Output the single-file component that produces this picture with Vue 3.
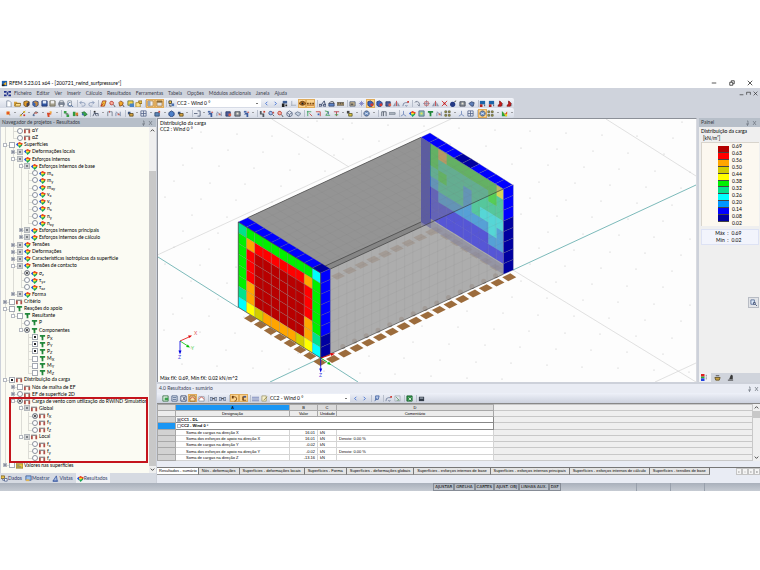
<script setup>
import { h, ref } from 'vue'

// every glyph is drawn on an 8x8 grid: [path, fill, stroke]
const glyphs = {
  app: [['M1 1h6v6h-6z', '#1d5fae'], ['M2 5l4-3v4z', '#f2b32c'], ['M1 5h3v2h-3z', '#222']],
  logo: [['M0 1h3v2h-3zM5 1h3v2h-3zM0 5h3v2h-3zM5 5h3v2h-3z', '#20308c'], ['M3 4h2M4 2v4', '', '#20308c']],
  doc: [['M2 1h3l2 2v5h-5z', '#fff', '#7f8ca0']],
  open: [['M0 2h3l1 1h3v4h-7z', '#d8a138'], ['M1 7l1-3h6l-1 3z', '#ffe08a', '#8a6420']],
  boxO: [['M1 2l3-1 3 1v4l-3 2-3-2z', '#e09a28', '#64481a'], ['M4 4l3-2v4l-3 2z', '#3d3d55']],
  boxB: [['M1 2l3-1 3 1v4l-3 2-3-2z', '#c98a3a', '#243c78'], ['M1 2l3 2v4l-3-2z', '#3764b4']],
  save: [['M1 1h6v6h-6z', '#2f55a4', '#1c2f66'], ['M2 1h4v3h-4z', '#dfe8f8']],
  saveG: [['M1 1h6v6h-6z', '#a6a08c', '#6a665a'], ['M2 1h4v3h-4z', '#eee']],
  print: [['M1 3h6v3h-6z', '#8d97a6', '#4c5666'], ['M2 1h4v2h-4zM2 5h4v3h-4z', '#fff', '#6c7684']],
  preview: [['M1 1h4v6h-4z', '#fff', '#7c8796'], ['M4 3a2 2 0 1 0 1 3l2 2', '', '#35598f']],
  undo: [['M1 3h4a2 2 0 0 1 0 4h-2M1 3l2-2M1 3l2 2', '', '#8294b4']],
  redo: [['M7 3h-4a2 2 0 0 0 0 4h2M7 3l-2-2M7 3l-2 2', '', '#8294b4']],
  slab: [['M1 7l2-6h4l-2 6z', '#f0c23a', '#a03a20'], ['M1 7l3-3', '', '#c32020']],
  zoomR: [['M5 5l2 3', '', '#444'], ['M1 3a2 2 0 1 1 4 1 2 2 0 0 1-4-1z', '#f7b0a0', '#b8332a']],
  zoomO: [['M5 5l2 3', '', '#333'], ['M1 3l2-2 3 2-1 3-3 1z', '#f2a82c', '#8a4614']],
  win: [['M1 1h6v5h-6z', '#f6d44a', '#5c6f3a'], ['M3 4h5v4h-5z', '#4a84c4']],
  pack: [['M1 3h5v5h-5z', '#ffe48a', '#a8842c'], ['M4 1h4v3h-3z', '#e8c24c', '#86641a']],
  panel: [['M1 1h6v6h-6z', '#f0f0f0', '#b07a2c'], ['M1 1h3v6h-3z', '#9aa6b6']],
  panelT: [['M1 1h6v6h-6z', '#e4e4e4', '#a37230'], ['M1 1h6v2h-6z', '#8a6a34']],
  load: [['M1 1h3v3h-3z', '#f2c83a', '#333'], ['M4 4h3v3h-3z', '#4a70b0'], ['M2 5v2h2', '', '#333']],
  prev: [['M5 2l-2 2 2 2', '', '#2a5fd0']],
  next: [['M3 2l2 2-2 2', '', '#2a5fd0']],
  fx: [['M2 1h5v3h-5z', '#3a5a90'], ['M1 4h3v4h-3zM5 5h2v2h-2z', '#222']],
  axes: [['M2 1v5h5M2 6l-1 1', '', '#9aa4b4']],
  eye: [['M0 4q4-5 8 0q-4 4-8 0z', '#b56c1c', '#5c3206'], ['M3 3h2v2h-2z', '#123']],
  abc: [['M0 3h2v2h-2zM3 3h2v2h-2zM6 3h2v2h-2z', '#7a4a14'], ['M0 6h8', '', '#b4641c']],
  glass: [['M0 5h3v2h-3zM5 5h3v2h-3z', '', '#26365c'], ['M3 5l3-4M7 5l-1-4', '', '#26365c']],
  bed: [['M1 4h6v3h-6z', '#5c84c8', '#33446c'], ['M1 4l2-2h3l1 2', '', '#333']],
  ruler: [['M0 3h8v3h-8z', '#b8a070', '#5a5648'], ['M2 3v2M4 3v2M6 3v2', '', '#444']],
  img: [['M1 2h6v5h-6z', '#c8b48a', '#50607a'], ['M2 4h3v2h-3z', '#5c5c5c']],
  sun: [['M4 1v6M1 4h6M2 2l4 4M6 2l-4 4', '', '#7a80c4']],
  redblue: [['M1 2l3-1 3 2v3l-3 2-3-2z', '#3a64c0', '#24366c'], ['M4 4h3v3h-3z', '#d43a30']],
  globe: [['M4 1a3 3 0 1 0 .1 0z', '#6c90c4', '#3a4c6c'], ['M2 3l4 2M2 5l4-2', '', '#dce6f4']],
  iso: [['M1 3l3-2 3 2v3l-3 2-3-2zM1 3l3 2 3-2M4 5v3', '', '#51617e']],
  sheet: [['M1 4l3-2 4 2-3 3z', '#c2cede', '#66748a']],
  rot: [['M2 2q5-1 4 5M6 7l-2-2M1 3l2-2', '', '#697284']],
  move: [['M4 0v8M0 4h8', '', '#8892ac'], ['M2 2h4v4h-4z', '', '#c05a5a']],
  mirror: [['M4 1v6', '', '#c03030'], ['M3 2v5h-3zM5 2v5h3z', '#8a94a8']],
  cross: [['M1 1l6 6M7 1l-6 6', '', '#d01818'], ['M3 3h2v2h-2z', '#c02020']],
  ball: [['M3 2a3 3 0 1 0 .1 0z', '#243a84'], ['M5 2l2-1', '', '#222']],
  camera: [['M1 2h6v5h-6z', '#8c939c', '#40454e'], ['M3 3h2v2h-2z', '#e8e4d0']],
  hand: [['M1 4l3-2 3 1-1 4h-2z', '#5f7fb8', '#33466c']],
  blueRed: [['M1 1h6v4h-6z', '#1c64a8'], ['M1 5h3v3h-3z', '#b42420'], ['M6 5h1v2h-1z', '#27405c']],
  flame: [['M3 1l3 3-1 3h-4l2-3z', '#cc1c1c', '#7c1010'], ['M6 4h1v3h-1z', '#88929c']],
  node: [['M2 2h3v3h-3z', '#e03a20', '#f0a040'], ['M5 5h1v1h-1z', '#444']],
  line: [['M1 7l6-6', '', '#3a3a3a'], ['M1 5h2v2h-2zM5 1h2v2h-2z', '#d8b020'], ['M5 5h2v2h-2z', '#d03428']],
  line2: [['M1 6l3-4 3 1', '', '#444'], ['M3 3h3v1h-3z', '#d03a2a'], ['M1 5h2v2h-2z', '#5470a0']],
  surf: [['M1 3h5v2h-2v3h-2z', '#d84a2a'], ['M4 1l3 1-2 3z', '#f0a83c']],
  green: [['M1 1h3v3h-3zM4 5h3v3h-3z', '#36a046'], ['M3 4h3v1h-3z', '#333']],
  greenO: [['M1 2h3v5h-3z', '#2f9a40'], ['M4 3h3v3h-3z', '#d87a2c'], ['M5 6h2v1h-2z', '#7a3a10']],
  greenB: [['M1 3l3-1 3 3-3 2z', '#39a84a', '#1d6a30'], ['M1 4h2v2h-2z', '#3d6cc0']],
  frame: [['M2 7v-5h5v5', '', '#6a7484'], ['M4 1v2', '', '#c83830']],
  man: [['M2 1h2v2h-2z', '#333'], ['M1 7l2-4 2 4M3 4h4v3', '', '#3c4860']],
  lcube: [['M1 2h3v3h-3z', '#36517e'], ['M3 4h4v3h-4z', '#d8a43c', '#5a4a24']],
  grid: [['M1 1h6v6h-6zM1 4h6M4 1v6', '', '#53648a']],
  bluecube: [['M1 3l3-2 3 2v3l-3 2-3-2z', '#4d80c8', '#1f3a70']],
  shade: [['M1 3h5v4h-5z', '#5d86b8', '#2f4768'], ['M5 1h2v2h-2z', '#d84a3a']],
  arrowI: [['M0 4h4M4 1h3v6h-3', '', '#4a5670']],
  measA: [['M1 1h3v2h-3z', '#4c6aa8'], ['M3 3h3v5h-2v-3h-3z', '#3a5a9c'], ['M5 2h2v1h-2z', '#c43028']],
  measB: [['M1 2l5 4M6 2v5M1 3v4', '', '#6f80a2'], ['M3 4h2v2h-2z', '#d06a5a']],
  loadB: [['M1 2h5v5h-5z', '#4a5c9c', '#27345c'], ['M4 4h3v3h-3z', '#d86048']],
  tool: [['M1 1h2v3h3v4h-2v-3h-3z', '#51575f'], ['M5 1h2v2h-2z', '#c84030']],
  zoomB: [['M5 5l2 2', '', '#444'], ['M1 3a2 2 0 1 1 4 1 2 2 0 0 1-4-1z', '#a9c4ec', '#2e4f90'], ['M5 2h2v2h-2z', '#c85048']],
  vx: [['M1 2h5M2 1v6', '', '#2f9a54'], ['M4 4l3 3', '', '#c03a34']],
  vy: [['M1 2h5v5', '', '#c0362c'], ['M3 4h2v2h-2z', '#3764b4']],
  vz: [['M1 1l4 1-3 4h5', '', '#2c9448'], ['M5 2v3', '', '#385a9c']],
  vi: [['M1 2h6M4 2v5', '', '#b03440'], ['M2 5h4v1h-4z', '#36a046']],
  opt: [['M1 1h3v3h-3z', '#444'], ['M3 4h4v3h-4z', '#d8c03a', '#5a5a34']],
  rail: [['M2 7v-5h5v5M4 2v5', '', '#4a5462']],
  lens: [['M0 3h7v2h-7z', '#b4bcc6', '#7c8692']],
  tri: [['M4 1v4l-3 2M4 5l3 2', '', '#6b84b8']],
  rainbow: [['M1 3l3-2 4 2-2 2z', '#e83018'], ['M0 4l2-2 1 3-1 1z', '#1f52e0'], ['M2 5l5-1 0 1-3 3z', '#18a858'], ['M2 3l4 0-1 2h-2z', '#ffe628']],
  mesh: [['M1 1h6v6h-6z', '#8cc8a8', '#53648a'], ['M3 3h2v2h-2z', '#f0e050']],
  support: [['M1 1h6v2h-2v4h-2v-4h-2z', '#238a3c'], ['M3 3h1v1h-1z', '#0e4a1c']],
  squares: [['M1 1h2v2h-2zM5 1h2v2h-2zM1 5h2v2h-2zM5 5h2v2h-2z', '#c8b83c', '#5a5c44']],
  chart: [['M1 1v6h6z', '#2aa040'], ['M2 2l3 3 2-4v6h-2z', '#f0d020'], ['M4 5l3-3v2z', '#d02020']],
  redN: [['M0 2h7v1h-7z', '#50505a'], ['M0 3h2v4h-2zM5 3h2v4h-2z', '#b05048']],
  note: [['M0 2h8v5h-8z', '#e9c83c', '#8c7420'], ['M1 3h3v1h-3zM1 5h5v1h-5z', '#5a6a8a']],
  data: [['M0 1h4v3h-4z', '#f0c64c', '#7c6420'], ['M4 4h3v3h-3zM2 4v2h2', '#fff', '#4a5c88']],
  view: [['M1 7l4-6 1 6z', '#a8bce0', '#3454a0'], ['M1 7h6', '', '#3454a0']],
  show: [['M1 1h6v5h-6z', '#9cc0ec', '#3a5a94'], ['M1 5h4v2h-4z', '#e0b454']],
  tabG: [['M1 1h6v6h-6z', '#e9f4ea', '#2c6a3c'], ['M3 3h4v3h-4z', '#38a04c']],
  tabB: [['M1 1h6v6h-6z', '#e6edf8', '#40557c'], ['M2 3h4M2 5h4', '', '#40557c']],
  tabX: [['M1 1h6v6h-6z', '#fff', '#26365c'], ['M3 2l3 4M6 2l-3 4', '', '#26365c']],
  tabR: [['M1 2h6v5h-6z', '#fff', '#8a90a0'], ['M1 5l3-3 3 3', '', '#d04a40']],
  tabRO: [['M1 1h6v6h-6z', '#fbe0a8', '#8a5a20'], ['M1 5l3-3 3 3', '', '#c03a30']],
  merge: [['M0 3h3v3h-3zM5 3h3v3h-3z', '#c8d4e8', '#51617e'], ['M3 4h2', '', '#333']],
  hookA: [['M1 2h3a2 2 0 0 1 0 5', '', '#70400e'], ['M1 1h2v3h-2z', '#6a3c0c']],
  hookB: [['M6 2h-3v4h4M4 2v4', '', '#70400e'], ['M4 1h3v2h-3z', '#4a5a8c']],
  rows: [['M0 2h8v1h-8zM0 4h8v1h-8zM0 6h8v1h-8z', '#8290c0']],
  pen: [['M1 1h5v6h-5z', '#f6f0cc', '#a09a70'], ['M3 6l4-4', '', '#8a7a34']],
  pin: [['M2 7l2-3M3 1h4l-1 4h-3z', '#b6c8e8', '#3a5a9c']],
  pinR: [['M1 7q0-4 3-4h3M4 6a1 1 0 1 0 2 0', '', '#6a7896'], ['M6 1h2v2h-2z', '#d04038']],
  mark: [['M1 1h6v6h-6z', '#dfe4ec', '#a8b0bc'], ['M2 2l4 4h-3', '', '#6a9a74']],
  excel: [['M1 1h6v6h-6z', '#2f8f46', '#17602c'], ['M3 3l3 3M6 3l-3 3', '', '#fff']],
  calc: [['M1 2h6v5h-6z', '#333c48'], ['M2 3h4v1h-4z', '#cfd8e4']],
  legend: [['M0 0h4v3h-4z', '#e02020'], ['M0 3h4v2h-4z', '#28b040'], ['M0 5h4v3h-4z', '#2040e0'], ['M6 1v1M6 3v1M6 5v1', '', '#444']],
  scale: [['M1 4h6l-1 3h-4z', '#c8a040', '#5a4a20'], ['M2 2h4', '', '#333']],
  scope: [['M1 7h6M3 6l2-5 1 1v4', '#444', '#222']],
  lookup: [['M1 1h4v5h-4z', '#dce8f8', '#4c6490'], ['M4 4h2v2h-2zM6 6l2 2', '#fff', '#33466c']]
}

const Glyph = (props) =>
  h('svg', { viewBox: '0 0 8 8', class: 'glyph', 'aria-hidden': 'true' },
    (glyphs[props.name] || []).map((p) =>
      h('path', { d: p[0], fill: p[1] || 'none', stroke: p[2] || 'none', 'stroke-width': 0.9 })))
Glyph.props = ['name']

const menus = ['Ficheiro', 'Editar', 'Ver', 'Inserir', 'Cálculo', 'Resultados', 'Ferramentas', 'Tabela', 'Opções', 'Módulos adicionais', 'Janela', 'Ajuda']

// "|" is a separator, "v" a drop-down caret, a leading * marks a pressed button
const split = (text) => text.split(' ')
const barA = split('doc open boxO boxB save saveG print preview | undo redo | slab zoomR zoomO win pack | *panel *panelT | load')
const barB = split('prev next fx axes *eye *abc | glass bed ruler | img sun *redblue redblue loadB mirror pinR | rot move mirror cross ball camera hand | blueRed blueRed flame flame')
const barC = split('node v line v line2 v surf v | green greenO greenB | man v frame measB | lcube v grid v shade v bluecube lcube v | arrowI v measA measB loadB camera measA v | tool zoomB zoomR iso sheet | vx vy vz vi v opt v | globe v | rail lens | tri rainbow mesh support measB squares v tri grid | *globe squares v chart v')
const barTable = split('tabG tabB tabX *tabRO tabR | merge merge | *hookA *hookB | rows pen')
const barTable2 = split('prev next | pin | pinR mark | excel | calc')

// depth, mark, icon, text, subscript, expander
const rows = [
  [1, 'r', 'redN', 'αY'], [1, 'r', 'redN', 'αZ'],
  [0, 'c', 'rainbow', 'Superfícies', '', '-'],
  [1, 'm', 'rainbow', 'Deformações locais', '', '+'],
  [1, 'm', 'rainbow', 'Esforços internos', '', '-'],
  [2, 'm', 'rainbow', 'Esforços internos de base', '', '-'],
  [3, 'r', 'rainbow', 'm', 'x'], [3, 'r', 'rainbow', 'm', 'y'], [3, 'r', 'rainbow', 'm', 'xy'],
  [3, 'r', 'rainbow', 'v', 'x'], [3, 'r', 'rainbow', 'v', 'y'], [3, 'r', 'rainbow', 'n', 'x'],
  [3, 'r', 'rainbow', 'n', 'y'], [3, 'r', 'rainbow', 'n', 'xy'],
  [2, 'm', 'rainbow', 'Esforços internos principais', '', '+'],
  [2, 'm', 'rainbow', 'Esforços internos de cálculo', '', '+'],
  [1, 'm', 'rainbow', 'Tensões', '', '+'],
  [1, 'm', 'rainbow', 'Deformações', '', '+'],
  [1, 'm', 'rainbow', 'Características isotrópicas da superfície', '', '+'],
  [1, 'm', 'rainbow', 'Tensões de contacto', '', '-'],
  [2, 'R', 'rainbow', 'σ', 'z'], [2, 'r', 'rainbow', 'τ', 'yz'], [2, 'r', 'rainbow', 'τ', 'xz'],
  [1, 'm', 'rainbow', 'Forma', '', '+'],
  [0, 'c', 'redN', 'Critério', '', '+'],
  [0, 'c', 'support', 'Reações do apoio', '', '-'],
  [1, 'c', 'support', 'Resultante', '', '-'],
  [2, 'r', 'support', 'P'],
  [2, 'R', 'support', 'Componentes', '', '-'],
  [3, 'C', 'support', 'P', 'X'], [3, 'C', 'support', 'P', 'Y'], [3, 'C', 'support', 'P', 'Z'],
  [3, 'c', 'support', 'M', 'X'], [3, 'c', 'support', 'M', 'Y'], [3, 'c', 'support', 'M', 'Z'],
  [0, 'C', 'redN', 'Distribuição da carga', '', '-'],
  [1, 'c', 'redN', 'Nós de malha de EF', '', '+'],
  [1, 'r', 'redN', 'EF de superfície 2D', '', '+'],
  [1, 'R', 'redN', 'Carga de vento com utilização do RWIND Simulation', '', '-'],
  [2, 'm', 'redN', 'Global', '', '-'],
  [3, 'R', 'redN', 'f', 'X'], [3, 'r', 'redN', 'f', 'Y'], [3, 'r', 'redN', 'f', 'Z'],
  [2, 'm', 'redN', 'Local', '', '-'],
  [3, 'r', 'redN', 'f', 'x'], [3, 'r', 'redN', 'f', 'y'], [3, 'r', 'redN', 'f', 'z'],
  [0, 'c', 'note', 'Valores nas superfícies', '', '+']
]

// does the branch at this depth go on below row i?
const goesOn = (i, depth) => {
  for (let k = i + 1; k < rows.length; k++) {
    if (rows[k][0] === depth) return true
    if (rows[k][0] < depth) return false
  }
  return false
}

const tree = ref(rows.map(([depth, mark, icon, text, sub, exp], i) => ({
  id: 'row' + i,
  depth, icon, text, sub, exp,
  radio: mark.toLowerCase() === 'r',
  mixed: mark === 'm',
  checked: mark === 'R' || mark === 'C',
  guides: Array.from({ length: depth + 1 }, (_, d) => ({
    own: d === depth,
    down: goesOn(i, d)
  }))
})))

const navTabs = [['data', 'Dados'], ['show', 'Mostrar'], ['view', 'Vistas'], ['rainbow', 'Resultados']]

const legendColors = ['#b40000', '#ff0000', '#ffa500', '#d2cd00', '#ffff00', '#00f000', '#00e28c', '#00ffff', '#0096ff', '#0000ff', '#0000a0']
const legendValues = ['0.69', '0.63', '0.56', '0.50', '0.44', '0.38', '0.32', '0.26', '0.20', '0.14', '0.08', '0.02']

const tableRows = [
  ['Soma de cargas na direção X', '16.01', 'kN', ''],
  ['Soma dos esforços de apoio na direção X', '16.01', 'kN', 'Desvio:  0.00 %'],
  ['Soma de cargas na direção Y', '-0.02', 'kN', ''],
  ['Soma dos esforços de apoio na direção Y', '-0.02', 'kN', 'Desvio:  0.00 %'],
  ['Soma de cargas na direção Z', '-13.16', 'kN', '']
]
const sheets = ['Resultados - sumário', 'Nós - deformações', 'Superfícies - deformações locais', 'Superfícies - Forma', 'Superfícies - deformações globais', 'Superfícies - esforços internos de base', 'Superfícies - esforços internos principais', 'Superfícies - esforços internos de cálculo', 'Superfícies - tensões de base']
const toggles = ['AJUSTAR', 'GRELHA', 'CARTES', 'AJUST. OBJ', 'LINHAS AUX.', 'DXF']

// model drawing
const shade = {
  T: '#00e28c', G: '#00f000', C: '#00ffff', O: '#ffa500', R: '#ff0000', D: '#b80000',
  Y: '#ffff00', L: '#d2cd00', B: '#0000ff', N: '#0000a0', S: '#0096ff'
}
const quad = (x, y, ux, uy, vx, vy) =>
  `${x},${y} ${x + ux},${y + uy} ${x + ux + vx},${y + uy + vy} ${x + vx},${y + vy}`

const patch = (map, x, y, ux, uy, vx, vy) =>
  map.flatMap((line, r) => [...line].map((key, c) => ({
    fill: shade[key],
    points: quad(x + c * ux + r * vx, y + c * uy + r * vy, ux, uy, vx, vy)
  })))

const front = patch(['TGGGGGGGGC', 'GORRRRRROG', 'GRDDDDDDRG', 'GRDDDDDDRG', 'GRDDDDDDRG', 'GODDDDDDOG', 'TODDDDDDOT', 'CYLOOOOLYC'],
  238.3, 222, 8.24, 5.1, 0, 10.65)
const frontTop = patch(['BBBBBBBBBN'], 238.3, 222, 8.24, 5.1, 9.4, -4.3)
const frontSide = patch(['B', 'B', 'B', 'B', 'B', 'B', 'N', 'N'], 320.7, 273, 9.6, -4.2, 0, 10.65)
const back = patch(['GGGGGGGGGG', 'GOGGGGGGYY', 'GTTTTTTGTT', 'TGTTSTTTTT', 'STTTSTCCCC', 'BSSSSSSCSS', 'BBBBBBBSSS', 'BBBBBBBBBB'],
  430, 133, 8.33, 5.17, 0, 10.67)
const backTop = patch(['BBBBNNBBBB'], 421, 137.3, 8.25, 5.17, 9, -4.3)
const backSide = patch(['B', 'B', 'B', 'N', 'N', 'N', 'N', 'N'], 503.4, 189, 9.9, -4.3, 0, 10.67)

const meshLines = []
for (let i = 1; i < 21; i++) {
  const x = 247.7 + i * 8.25
  const y = 217.7 - i * 3.83
  meshLines.push(`M${x} ${y}l82.6 51.5v85.3`)
}
for (let i = 1; i < 10; i++) meshLines.push(`M${247.7 + i * 8.26} ${217.7 + i * 5.13}l173.3 -80.4`)
for (let i = 1; i < 8; i++) meshLines.push(`M330.3 ${269 + i * 10.65}l173 -80`)

const pads = []
for (let i = 0; i < 8; i++) pads.push(quad(244 + i * 9.9, 318.2 + i * 6.2, 6, -3.4, 7, 4.3))
for (let i = 0; i < 16; i++) pads.push(quad(326 + i * 11.75, 359 - i * 5.45, 8, -4, 6, 3.9))
const hiddenPads = []
for (let i = 0; i < 9; i++) hiddenPads.push(quad(331 + i * 11.75, 276 - i * 5.5, 8, -3.7, 6, 3.7))
for (let i = 0; i < 7; i++) hiddenPads.push(quad(430 + i * 9.9, 229.5 + i * 6.2, 6, -2.8, 7, 4.3))

const dots = []
for (let i = -4; i < 22; i++) {
  for (let j = -6; j < 24; j++) {
    const x = 210 + i * 35.6 - j * 9
    const y = 116 + i * 1.7 + j * 16.2
    if (x > 160 && x < 694 && y > 121 && y < 380) dots.push([Math.round(x), Math.round(y)])
  }
}
</script>

<template>
  <div class="app">
    <header class="titlebar">
      <Glyph name="app" />
      <h1>RFEM 5.23.01 x64 - [200721_rwind_surfpressure*]</h1>
      <div class="winbtns">
        <button type="button" aria-label="Minimizar"><svg viewBox="0 0 8 8"><path d="M1 4h6" /></svg></button>
        <button type="button" aria-label="Restaurar"><svg viewBox="0 0 8 8"><path d="M1 3h4v4h-4zM3 3v-2h4v4h-2" /></svg></button>
        <button type="button" aria-label="Fechar"><svg viewBox="0 0 8 8"><path d="M1 1l6 6M7 1l-6 6" /></svg></button>
      </div>
    </header>

    <nav class="menubar">
      <Glyph name="logo" />
      <button v-for="m in menus" :key="m" type="button">{{ m }}</button>
      <div class="childbtns">
        <button type="button" aria-label="Minimizar janela"><svg viewBox="0 0 8 8"><path d="M1 6h6" /></svg></button>
        <button type="button" aria-label="Restaurar janela"><svg viewBox="0 0 8 8"><path d="M1 6v-4h6v4" /></svg></button>
        <button type="button" aria-label="Fechar janela"><svg viewBox="0 0 8 8"><path d="M1 1l6 6M7 1l-6 6" /></svg></button>
      </div>
    </nav>

    <div class="bars">
      <div class="toolbar">
        <template v-for="(t, i) in barA" :key="'a' + i">
          <i v-if="t === '|'" class="sep"></i>
          <button v-else type="button" :class="{ on: t[0] === '*' }" :aria-label="t"><Glyph :name="t.replace('*', '')" /></button>
        </template>
        <select class="combo" aria-label="Caso de carga"><option>CC2 - Wind 0 °</option></select>
        <template v-for="(t, i) in barB" :key="'b' + i">
          <i v-if="t === '|'" class="sep"></i>
          <button v-else type="button" :class="{ on: t[0] === '*' }" :aria-label="t"><Glyph :name="t.replace('*', '')" /></button>
        </template>
      </div>
      <div class="toolbar">
        <template v-for="(t, i) in barC" :key="'c' + i">
          <i v-if="t === '|'" class="sep"></i>
          <button v-else-if="t === 'v'" type="button" class="caret" aria-label="Mais"></button>
          <button v-else type="button" :class="{ on: t[0] === '*' }" :aria-label="t"><Glyph :name="t.replace('*', '')" /></button>
        </template>
      </div>
    </div>

    <main>
      <aside class="navigator">
        <div class="dockhead">
          <h2>Navegador de projetos - Resultados</h2>
          <svg class="dockbtns" viewBox="0 0 12 6"><path d="M1 4h3M2.500 4v2M2 1h1v3M8 1l3 4M11 1l-3 4" /></svg>
        </div>
        <div class="treebox">
          <ul class="tree">
            <li v-for="(n, i) in tree" :key="i">
              <span v-for="(g, d) in n.guides" :key="d" class="guide" :class="['g' + d, { own: g.own, down: g.down }]">
                <button v-if="g.own && n.exp" type="button" class="exp" :class="{ plus: n.exp === '+' }" :aria-label="'Expandir ' + n.text"></button>
              </span>
              <input :id="n.id" v-model="n.checked" type="checkbox" :class="{ radio: n.radio, mixed: n.mixed }" />
              <label :for="n.id"><Glyph :name="n.icon" /><span>{{ n.text }}<sub v-if="n.sub">{{ n.sub }}</sub></span></label>
            </li>
          </ul>
          <div class="scroll">
            <svg viewBox="0 0 8 8"><path d="M2 5l2-2 2 2" /></svg>
            <div class="thumb"></div>
            <svg viewBox="0 0 8 8"><path d="M2 3l2 2 2-2" /></svg>
          </div>
          <div class="mark"></div>
        </div>
        <div class="navtabs">
          <button v-for="t in navTabs" :key="t[1]" type="button" :class="{ active: t[1] === 'Resultados' }"><Glyph :name="t[0]" />{{ t[1] }}</button>
        </div>
      </aside>

      <div class="work">
        <div class="upper">
          <section class="viewport">
            <svg viewBox="158 119 538 263" preserveAspectRatio="xMinYMin meet">
              <defs>
                <clipPath id="underRoof"><path d="M421 137.300L503.300 189L400 237V137z" /></clipPath>
                <clipPath id="behindWall"><path d="M503.300 189V274.300L421 222V227z" /></clipPath>
              </defs>
              <circle v-for="(d, i) in dots" :key="i" :cx="d[0]" :cy="d[1]" r="0.5" fill="#b8b8b8" />
              <path class="far" d="M158 254.700L451 119M271.700 119L349 167M606 119L696 176M513 270L696 382M655 382L696 363" />
              <path class="axis" d="M158 257L238 307.500M270 382L320.700 358L358 382M513 270L696 185" />

              <polygon v-for="p in pads" :key="p" :points="p" fill="#9c6c3c" />
              <polygon points="247.7,217.7 421,137.3 503.3,189 503.3,274.300 330.3,354" fill="#adadad" />
              <polygon points="247.7,217.7 421,137.3 503.3,189 330.3,269" fill="#949494" />
              <polygon v-for="p in hiddenPads" :key="p" :points="p" fill="#a39b95" />
              <circle v-for="i in 14" :key="'r' + i" :cx="331 + i * 11.75" :cy="352 - i * 5.45" r="2.500" fill="#a29c98" />
              <polygon points="330.3,269 421,227 421,222 323,267" fill="#868686" />
              <g clip-path="url(#underRoof)">
                <polygon points="421,137.3 431,143 431,229 421,224" fill="#5c5ca0" />
                <polygon v-for="(c, i) in back" :key="i" :points="c.points" :fill="c.fill" opacity="0.32" />
              </g>
              <g clip-path="url(#behindWall)">
                <polygon points="421,137.3 431,143 431,229 421,224" fill="#6c6ab0" />
                <polygon v-for="(c, i) in back" :key="i" :points="c.points" :fill="c.fill" opacity="0.5" />
                <path d="M421 214L503.300 265V276L421 225z" fill="#8a8aa0" opacity="0.7" />
              </g>
              <path class="mesh" :d="meshLines.join('')" />
              <path class="edge" d="M247.700 217.700L421 137.300M330.300 269L503.300 189M330.300 354L503.300 274.300M323 267L421 222" />
              <polygon v-for="(c, i) in backTop" :key="'bt' + i" class="cell" :points="c.points" :fill="c.fill" />
              <polygon v-for="(c, i) in backSide" :key="'bs' + i" class="cell" :points="c.points" :fill="c.fill" />
              <polygon v-for="(c, i) in front" :key="'f' + i" class="cell" :points="c.points" :fill="c.fill" />
              <polygon v-for="(c, i) in frontTop" :key="'ft' + i" class="cell" :points="c.points" :fill="c.fill" />
              <polygon v-for="(c, i) in frontSide" :key="'fs' + i" class="cell" :points="c.points" :fill="c.fill" />
              <path class="edge" d="M238.300 222V307.300L320.700 358V273zM320.700 358L330.300 354" />

              <g class="triad">
                <path d="M180 341L189 337" stroke="#e00000" /><path d="M192 335.500l-4 0 1.500 2.500z" fill="#e00000" />
                <path d="M180 341L187 345.500" stroke="#00c000" /><path d="M190 347.500l-4-.5 1.800-2.500z" fill="#00c000" />
                <path d="M180 341V351" stroke="#0000e0" /><path d="M180 354.500l-1.500-4h3z" fill="#0000e0" />
                <path d="M320.700 358L330 355" stroke="#e00000" /><path d="M335 353.500l-5-.5 1 3z" fill="#e00000" />
                <path d="M320.700 358L327 362" stroke="#00c000" /><path d="M331 365l-4-1 2-2.500z" fill="#00c000" />
                <path d="M320.700 358V369" stroke="#0000e0" /><path d="M320.700 372.500l-1.500-4h3z" fill="#0000e0" />
                <text x="194" y="335" fill="#e06060">X</text><text x="191" y="350" fill="#50d050">Y</text>
                <text x="178" y="359" fill="#4040e0">Z</text><text x="319" y="377" fill="#4040e0">Z</text>
              </g>
              <text x="160" y="125">Distribuição da carga</text>
              <text x="160" y="131">CC2 : Wind 0 °</text>
              <text x="160" y="380">Máx fX: 0.69, Mín fX: 0.02 kN/m^2</text>
            </svg>
          </section>

          <aside class="panel">
            <div class="dockhead">
              <h2>Painel</h2>
              <svg class="dockbtns" viewBox="0 0 12 6"><path d="M1 4h3M2.500 4v2M2 1h1v3M8 1l3 4M11 1l-3 4" /></svg>
            </div>
            <div class="panelbody">
              <p>Distribuição da carga</p>
              <p>[kN/m²]</p>
              <div class="legend">
                <div class="swatches"><i v-for="c in legendColors" :key="c" :style="{ background: c }"></i></div>
                <ol><li v-for="v in legendValues" :key="v">{{ v }}</li></ol>
              </div>
              <dl>
                <dt>Máx&nbsp; :</dt><dd>0.69</dd>
                <dt>Mín&nbsp; :</dt><dd>0.02</dd>
              </dl>
              <button type="button" class="lookup" aria-label="Detalhes"><Glyph name="lookup" /></button>
            </div>
            <div class="paneltabs">
              <button type="button" class="active" aria-label="Cores"><Glyph name="legend" /></button>
              <button type="button" aria-label="Escala"><Glyph name="scale" /></button>
              <button type="button" aria-label="Filtro"><Glyph name="scope" /></button>
            </div>
          </aside>
        </div>

        <section class="results">
          <div class="reshead">
            <h2>4.0 Resultados - sumário</h2>
            <svg class="dockbtns" viewBox="0 0 12 6"><path d="M1 4h3M2.500 4v2M2 1h1v3M8 1l3 4M11 1l-3 4" /></svg>
          </div>
          <div class="restools">
            <template v-for="(t, i) in barTable" :key="'t' + i">
              <i v-if="t === '|'" class="sep"></i>
              <button v-else type="button" :class="{ on: t[0] === '*' }" :aria-label="t"><Glyph :name="t.replace('*', '')" /></button>
            </template>
            <select class="combo" aria-label="Caso da tabela"><option>CC2 - Wind 0 °</option></select>
            <template v-for="(t, i) in barTable2" :key="'u' + i">
              <i v-if="t === '|'" class="sep"></i>
              <button v-else type="button" :aria-label="t"><Glyph :name="t.replace('*', '')" /></button>
            </template>
          </div>
          <div class="gridbox">
            <table>
              <colgroup><col class="c0" /><col class="cA" /><col class="cB" /><col class="cC" /><col class="cD" /><col /></colgroup>
              <thead>
                <tr><th></th><th class="sel">A</th><th>B</th><th>C</th><th>D</th><td class="void"></td></tr>
                <tr><th></th><th>Designação</th><th>Valor</th><th>Unidade</th><th>Comentário</th><td class="void"></td></tr>
              </thead>
              <tbody>
                <tr class="group"><th></th><td colspan="4"><i class="exp plus"></i>CC1 - DL</td><td class="void"></td></tr>
                <tr class="group current"><th></th><td colspan="4"><i class="exp"></i>CC2 - Wind 0 °</td><td class="void"></td></tr>
                <tr v-for="(r, i) in tableRows" :key="i">
                  <th></th><td class="name">{{ r[0] }}</td><td class="num">{{ r[1] }}</td><td>{{ r[2] }}</td><td>{{ r[3] }}</td><td class="void"></td>
                </tr>
              </tbody>
            </table>
            <div class="scroll">
              <svg viewBox="0 0 8 8"><path d="M2 5l2-2 2 2" /></svg>
              <div class="thumb"></div>
              <svg viewBox="0 0 8 8"><path d="M2 3l2 2 2-2" /></svg>
            </div>
          </div>
          <div class="sheets">
            <button v-for="(s, i) in sheets" :key="s" type="button" :class="{ active: i === 0 }">{{ s }}</button>
            <div class="pager">
              <button v-for="d in ['M2 1v6M6 1l-3 3 3 3', 'M5 1l-3 3 3 3', 'M3 1l3 3-3 3z', 'M2 1l3 3-3 3zM6 1v6']" :key="d" type="button" aria-label="Folha"><svg viewBox="0 0 8 8"><path :d="d" /></svg></button>
            </div>
          </div>
        </section>
      </div>
    </main>

    <footer class="status">
      <button v-for="t in toggles" :key="t" type="button">{{ t }}</button>
      <i></i><i></i><i></i>
    </footer>
  </div>
</template>

<style>
body {
  margin: 0;
  background: #fff;
}
</style>

<style scoped>
.app {
  box-sizing: border-box;
  height: 100vh;
  padding: 78px 0 79px;
  display: flex;
  flex-direction: column;
  overflow: hidden;
  font: 5px/7px Lato, "Segoe UI", sans-serif;
  color: #000;
}

.app * {
  box-sizing: border-box;
}

button {
  margin: 0;
  padding: 0;
  border: 0;
  background: none;
  font: inherit;
  color: inherit;
  white-space: nowrap;
}

h1, h2, p, ul, ol, dl, dd {
  margin: 0;
  padding: 0;
  font: inherit;
  list-style: none;
}

svg {
  display: block;
}

.glyph {
  width: 7px;
  height: 7px;
  flex: none;
}

/* title and menu */
.titlebar {
  flex: 0 0 10px;
  display: flex;
  align-items: center;
  gap: 1px;
  padding-left: 1px;
}

.winbtns {
  margin-left: auto;
  display: flex;
  gap: 12px;
  padding-right: 7px;
}

.winbtns svg {
  width: 6px;
  height: 6px;
}

.winbtns path, .childbtns path {
  fill: none;
  stroke: #222;
}

.menubar {
  flex: 0 0 10px;
  display: flex;
  align-items: center;
  gap: 5px;
  padding-left: 4px;
  background: #cfd3dc;
  color: #3c414e;
}

.menubar > .glyph {
  margin-right: -2px;
}

.childbtns {
  margin-left: auto;
  display: flex;
  gap: 2px;
  padding-right: 2px;
}

.childbtns svg {
  width: 5px;
  height: 5px;
}

/* toolbars */
.bars {
  background: #cfd3dc;
}

.toolbar {
  display: flex;
  align-items: center;
  width: 514px;
  height: 10px;
  padding-left: 4px;
  background: linear-gradient(#f3f5fa, #d5dae5);
  border-radius: 0 2px 2px 0;
}

.toolbar button {
  flex: 1 1 0;
  height: 9px;
  display: flex;
  align-items: center;
  justify-content: center;
  min-width: 0;
}

.toolbar button.caret {
  flex: 0 0 5px;
}

.caret::after {
  content: "";
  border: 1px solid transparent;
  border-top-color: #555;
}

.toolbar .on, .restools .on {
  background: #fbd28c;
  box-shadow: inset 0 0 0 1px #e0ac5c;
}

.sep {
  flex: 0 0 3px;
  height: 7px;
  border-right: 1px solid #b8bfcc;
}

.combo {
  appearance: none;
  flex: 0 0 84px;
  height: 8px;
  margin: 0 1px;
  padding: 0;
  border: 0;
  border-radius: 0;
  background: #fff linear-gradient(#777, #777) no-repeat right 3px center / 2px 1px;
  font: 5px/8px Lato, "Segoe UI", sans-serif;
  color: #000;
}

/* main area */
main {
  flex: 1;
  min-height: 0;
  display: flex;
  gap: 1px;
  background: #cdd1da;
}

.navigator {
  flex: 0 0 156px;
  display: flex;
  flex-direction: column;
}

.dockhead {
  flex: 0 0 9px;
  display: flex;
  align-items: center;
  justify-content: space-between;
  padding: 0 3px 0 2px;
  background: #b7bfc9;
  color: #363b44;
}

.dockbtns {
  width: 12px;
  height: 6px;
}

.dockbtns path {
  fill: none;
  stroke: #6c727c;
  stroke-width: 0.7;
}

.treebox {
  position: relative;
  flex: 1;
  min-height: 0;
  display: flex;
  margin-left: 1px;
  background: #fbfbf3;
}

.tree {
  flex: 1;
  min-width: 0;
  display: grid;
  grid-auto-rows: 1fr;
  padding-bottom: 4px;
}

.tree li {
  display: flex;
  align-items: stretch;
  min-height: 0;
  white-space: nowrap;
}

.guide {
  position: relative;
  flex: 0 0 8px;
  display: flex;
  align-items: center;
  justify-content: center;
}

.guide.g2 {
  flex-basis: 7px;
}

.guide.down::before, .guide.own::before {
  content: "";
  position: absolute;
  left: 4px;
  top: 0;
  height: 50%;
  border-left: 1px solid #dcdcd6;
}

.guide.down::before {
  height: 100%;
}

.guide.own::after {
  content: "";
  position: absolute;
  left: 4px;
  right: 0;
  top: 50%;
  border-top: 1px solid #dcdcd6;
}

.exp {
  position: relative;
  z-index: 1;
  width: 4px;
  height: 4px;
  border: 1px solid #b4b8c0;
  background: #fff;
}

.exp.plus {
  background: #8a90a0;
}

.tree input {
  appearance: none;
  align-self: center;
  flex: none;
  width: 6px;
  height: 6px;
  margin: 0 1px 0 0;
  border: 1px solid #a4a9b2;
  background: #fff;
}

.tree input.radio {
  border-radius: 50%;
  border-color: #8c929e;
}

.tree input.mixed {
  background: #7c8086;
  border-color: #b4b8bc;
  box-shadow: inset 0 0 0 1px #d0d2d4;
}

.tree input:checked {
  background: #222;
  box-shadow: inset 0 0 0 1px #fff;
}

.tree label {
  display: flex;
  align-items: center;
  gap: 1px;
}

sub {
  font-size: 4px;
  line-height: 0;
  vertical-align: -1px;
}

.scroll {
  flex: 0 0 7px;
  display: flex;
  flex-direction: column;
  align-items: stretch;
  background: #efefef;
}

.scroll svg {
  height: 7px;
}

.scroll path {
  fill: none;
  stroke: #333;
}

.scroll .thumb {
  background: #c8c8c8;
}

.treebox .thumb {
  flex: 1;
  margin-top: 37px;
}

.mark {
  position: absolute;
  left: 5%;
  right: 5%;
  top: 78%;
  bottom: 3%;
  border: 2px solid #c4141c;
}

.navtabs {
  flex: 0 0 10px;
  display: flex;
  gap: 3px;
  padding-left: 1px;
  background: #d6dae2;
  color: #30406a;
}

.navtabs button {
  display: flex;
  align-items: center;
}

.navtabs .active {
  background: #f0f1f4;
  padding: 0 2px 0 1px;
}

.work {
  flex: 1;
  min-width: 0;
  display: flex;
  flex-direction: column;
}

.upper {
  flex: 1;
  min-height: 0;
  display: flex;
  gap: 2px;
}

.viewport {
  flex: 1;
  min-width: 0;
  overflow: hidden;
  border: 1px solid #8c9098;
  border-right-color: #d8dae0;
  border-bottom: 0;
  background: #fdfdfd;
}

.viewport svg {
  width: 100%;
}

.viewport text {
  font: 5px Lato, "Segoe UI", sans-serif;
}

.far {
  fill: none;
  stroke: #d4d4d4;
  stroke-width: 0.7;
}

.axis {
  fill: none;
  stroke: #5aa8a8;
  stroke-width: 0.8;
}

.mesh {
  fill: none;
  stroke: #777;
  stroke-width: 0.3;
  opacity: 0.3;
}

.edge {
  fill: none;
  stroke: #333;
  stroke-width: 0.6;
}

.cell {
  stroke: #777;
  stroke-width: 0.25;
}

.triad path {
  stroke-width: 0.8;
}

.panel {
  flex: 0 0 61px;
  display: flex;
  flex-direction: column;
  background: #efefef;
}

.panelbody {
  flex: 1;
  display: flex;
  flex-direction: column;
  padding: 1px 1px 0 2px;
}

.panelbody p:nth-child(2) {
  padding-left: 2px;
}

.legend {
  display: flex;
  gap: 3px;
  height: 84px;
  padding: 1px 0 1px 17px;
  background: #fcf8f0;
  box-shadow: inset 1px 1px 0 #d8d4cc;
}

.swatches {
  display: flex;
  flex-direction: column;
  width: 11px;
  margin: 3px 0;
}

.swatches i {
  flex: 1;
  border-bottom: 1px solid #444;
}

.legend ol {
  display: flex;
  flex-direction: column;
  justify-content: space-between;
}

dl {
  display: grid;
  grid-template-columns: 1fr 1fr;
  column-gap: 3px;
  margin-top: 3px;
  border: 1px solid #dde2f4;
  background: #f2f4fc;
}

dt {
  text-align: right;
}

.lookup {
  align-self: flex-end;
  margin-top: 52px;
  padding: 1px;
  background: #e2e4e8;
  border: 1px solid #b8bcc4;
}

.paneltabs {
  flex: 0 0 9px;
  display: flex;
  gap: 1px;
  background: #d0d4dc;
}

.paneltabs button {
  width: 12px;
  padding-left: 2px;
}

.paneltabs .active {
  background: #f0f1f4;
}

/* results table */
.results {
  flex: 0 0 99px;
  display: flex;
  flex-direction: column;
  margin-top: 2px;
  background: #e9ecf4;
  font: 4px/6px "Liberation Sans", sans-serif;
}

.reshead {
  flex: 0 0 9px;
  display: flex;
  align-items: center;
  justify-content: space-between;
  padding: 0 1px 0 2px;
  color: #3a4254;
  font: 5px/9px Lato, "Segoe UI", sans-serif;
}

.restools {
  flex: 0 0 10px;
  display: flex;
  align-items: center;
  padding-left: 4px;
  background: linear-gradient(#eef1f9, #cdd2de);
}

.restools button {
  flex: 0 0 9px;
  height: 8px;
  display: flex;
  align-items: center;
  justify-content: center;
}

.restools .combo {
  flex-basis: 80px;
}

.gridbox {
  flex: 0 0 58px;
  display: flex;
  border-top: 1px solid #888;
}

table {
  flex: 1;
  table-layout: fixed;
  width: 100%;
  height: 57px;
  border-collapse: collapse;
  background: #fff;
}

.c0 { width: 18px; }
.cA { width: 114px; }
.cB { width: 28px; }
.cC { width: 19px; }
.cD { width: 157px; }

th, td {
  padding: 0 2px;
  border: 1px solid #d4d4d4;
  line-height: 5px;
  white-space: nowrap;
  overflow: hidden;
}

th {
  background: #ececec;
  border-color: #a8a8a8;
  font-weight: normal;
  text-align: center;
}

tbody th {
  background: #d2d2d2;
}

thead tr:first-child th {
  background: #dcdcdc;
}

thead tr:first-child th.sel, .current th {
  background: #1a96f4;
}

td.void {
  background: #efefef;
  border-color: #c8c8c8;
}

.group td:not(.void) {
  padding-left: 1px;
  font-weight: bold;
  border-color: #888;
}

.group .exp {
  display: inline-block;
  vertical-align: middle;
}

.name {
  padding-left: 10px;
}

.num {
  text-align: right;
}

.gridbox .thumb {
  flex: 0 0 7px;
  margin-bottom: auto;
}

.sheets {
  display: flex;
  margin-top: 6px;
  height: 8px;
  border-top: 1px solid #777;
}

.sheets > button {
  padding: 0 3px;
  border-right: 1px solid #777;
  border-bottom: 1px solid #999;
  background: #e4e4e4;
}

.sheets > .active {
  padding: 0 1px 0 2px;
  background: #fff;
}

.pager {
  margin-left: auto;
  display: flex;
}

.pager button {
  width: 6px;
  padding: 1px;
  background: #f4f4f4;
  border: 1px solid #c4c4c4;
}

.pager path {
  fill: none;
  stroke: #333;
}

.status {
  flex: 0 0 8px;
  display: flex;
  align-items: stretch;
  padding-left: 57%;
  background: linear-gradient(#a9b0bb, #c6cbd3);
  font: 4px/6px "DejaVu Sans", Verdana, sans-serif;
}

.status button {
  padding: 0 1px;
  border: 1px solid #868c96;
}

.status i {
  flex: 0 0 34px;
  border-right: 1px solid #98a0ac;
}

.status i:nth-of-type(1) {
  flex-basis: 76px;
}
</style>
